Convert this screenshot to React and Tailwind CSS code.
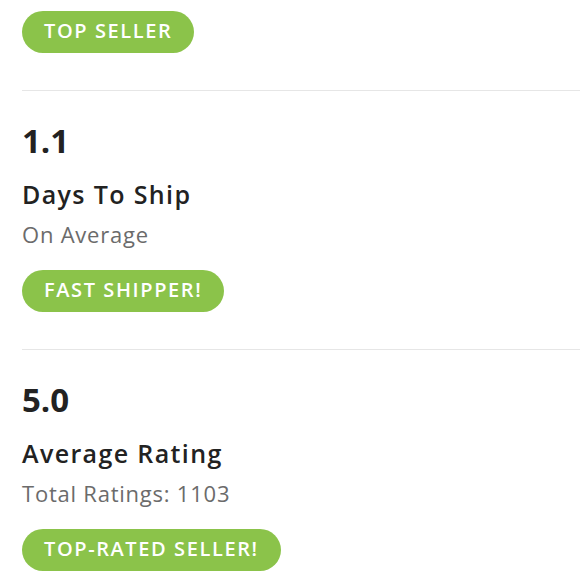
import React from "react";

const font = { fontFamily: "'Open Sans', Lato, sans-serif" };

function Pill({ children }) {
  return (
    <div className="flex">
      <div className="h-[42px] rounded-full bg-[#8bc34a] px-[22px] flex items-center pb-[2px] text-white text-[20px] font-semibold tracking-[0.08em] leading-none">
        {children}
      </div>
    </div>
  );
}

function Stat({ num, title, sub, badge }) {
  return (
    <div className="pt-[30px] pb-[37px] border-b border-[#e6e6e6]">
      <div className="text-[33px] leading-[40px] font-bold text-[#222222]">{num}</div>
      <div className="mt-[17px] text-[25px] leading-[32px] font-semibold tracking-[0.055em] text-[#222222]">{title}</div>
      <div className="mt-[9px] text-[22px] leading-[30px] tracking-[0.035em] text-[#6b6b6b]">{sub}</div>
      <div className="mt-[21px]">
        <Pill>{badge}</Pill>
      </div>
    </div>
  );
}

export default function App() {
  return (
    <div className="w-[580px] h-[580px] overflow-hidden bg-white pl-[22px]" style={font}>
      <div className="pt-[11px] pb-[37px] border-b border-[#e6e6e6]">
        <Pill>TOP SELLER</Pill>
      </div>
      <Stat num="1.1" title="Days To Ship" sub="On Average" badge="FAST SHIPPER!" />
      <Stat num="5.0" title="Average Rating" sub="Total Ratings: 1103" badge="TOP-RATED SELLER!" />
    </div>
  );
}
